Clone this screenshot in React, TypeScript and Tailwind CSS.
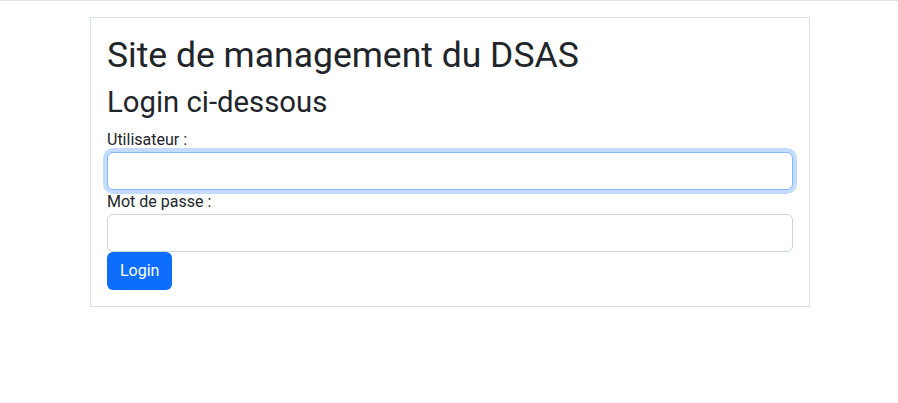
import React from 'react';

export default function App() {
  return (
    <div className="min-h-[403px] bg-white text-[#212529] font-['Roboto',sans-serif] text-base leading-6">
      <div className="h-px bg-[#dee2e6]" />
      <div className="ml-[90px] mt-4 w-[720px] border border-[#dee2e6] p-4">
        <h1 className="mb-2 text-[35.5px] leading-[1.2] font-normal">Site de management du DSAS</h1>
        <h2 className="mb-2 text-[29.3px] leading-[1.2] font-normal">Login ci-dessous</h2>
        <form className="flex flex-col" onSubmit={(e) => e.preventDefault()}>
          <label htmlFor="user" className="leading-6">Utilisateur :</label>
          <input
            id="user"
            type="text"
            className="h-[38px] w-full rounded-md border border-[#86b7fe] bg-white px-3 py-1.5 leading-6 shadow-[0_0_0_4px_rgba(13,110,253,0.25)] outline-none"
          />
          <label htmlFor="pass" className="leading-6">Mot de passe :</label>
          <input
            id="pass"
            type="password"
            className="h-[38px] w-full rounded-md border border-[#ced4da] bg-white px-3 py-1.5 leading-6 outline-none"
          />
          <div>
            <button
              type="submit"
              className="h-[38px] rounded-md bg-[#0d6efd] px-[13px] py-1.5 leading-6 text-white"
            >
              Login
            </button>
          </div>
        </form>
      </div>
    </div>
  );
}
